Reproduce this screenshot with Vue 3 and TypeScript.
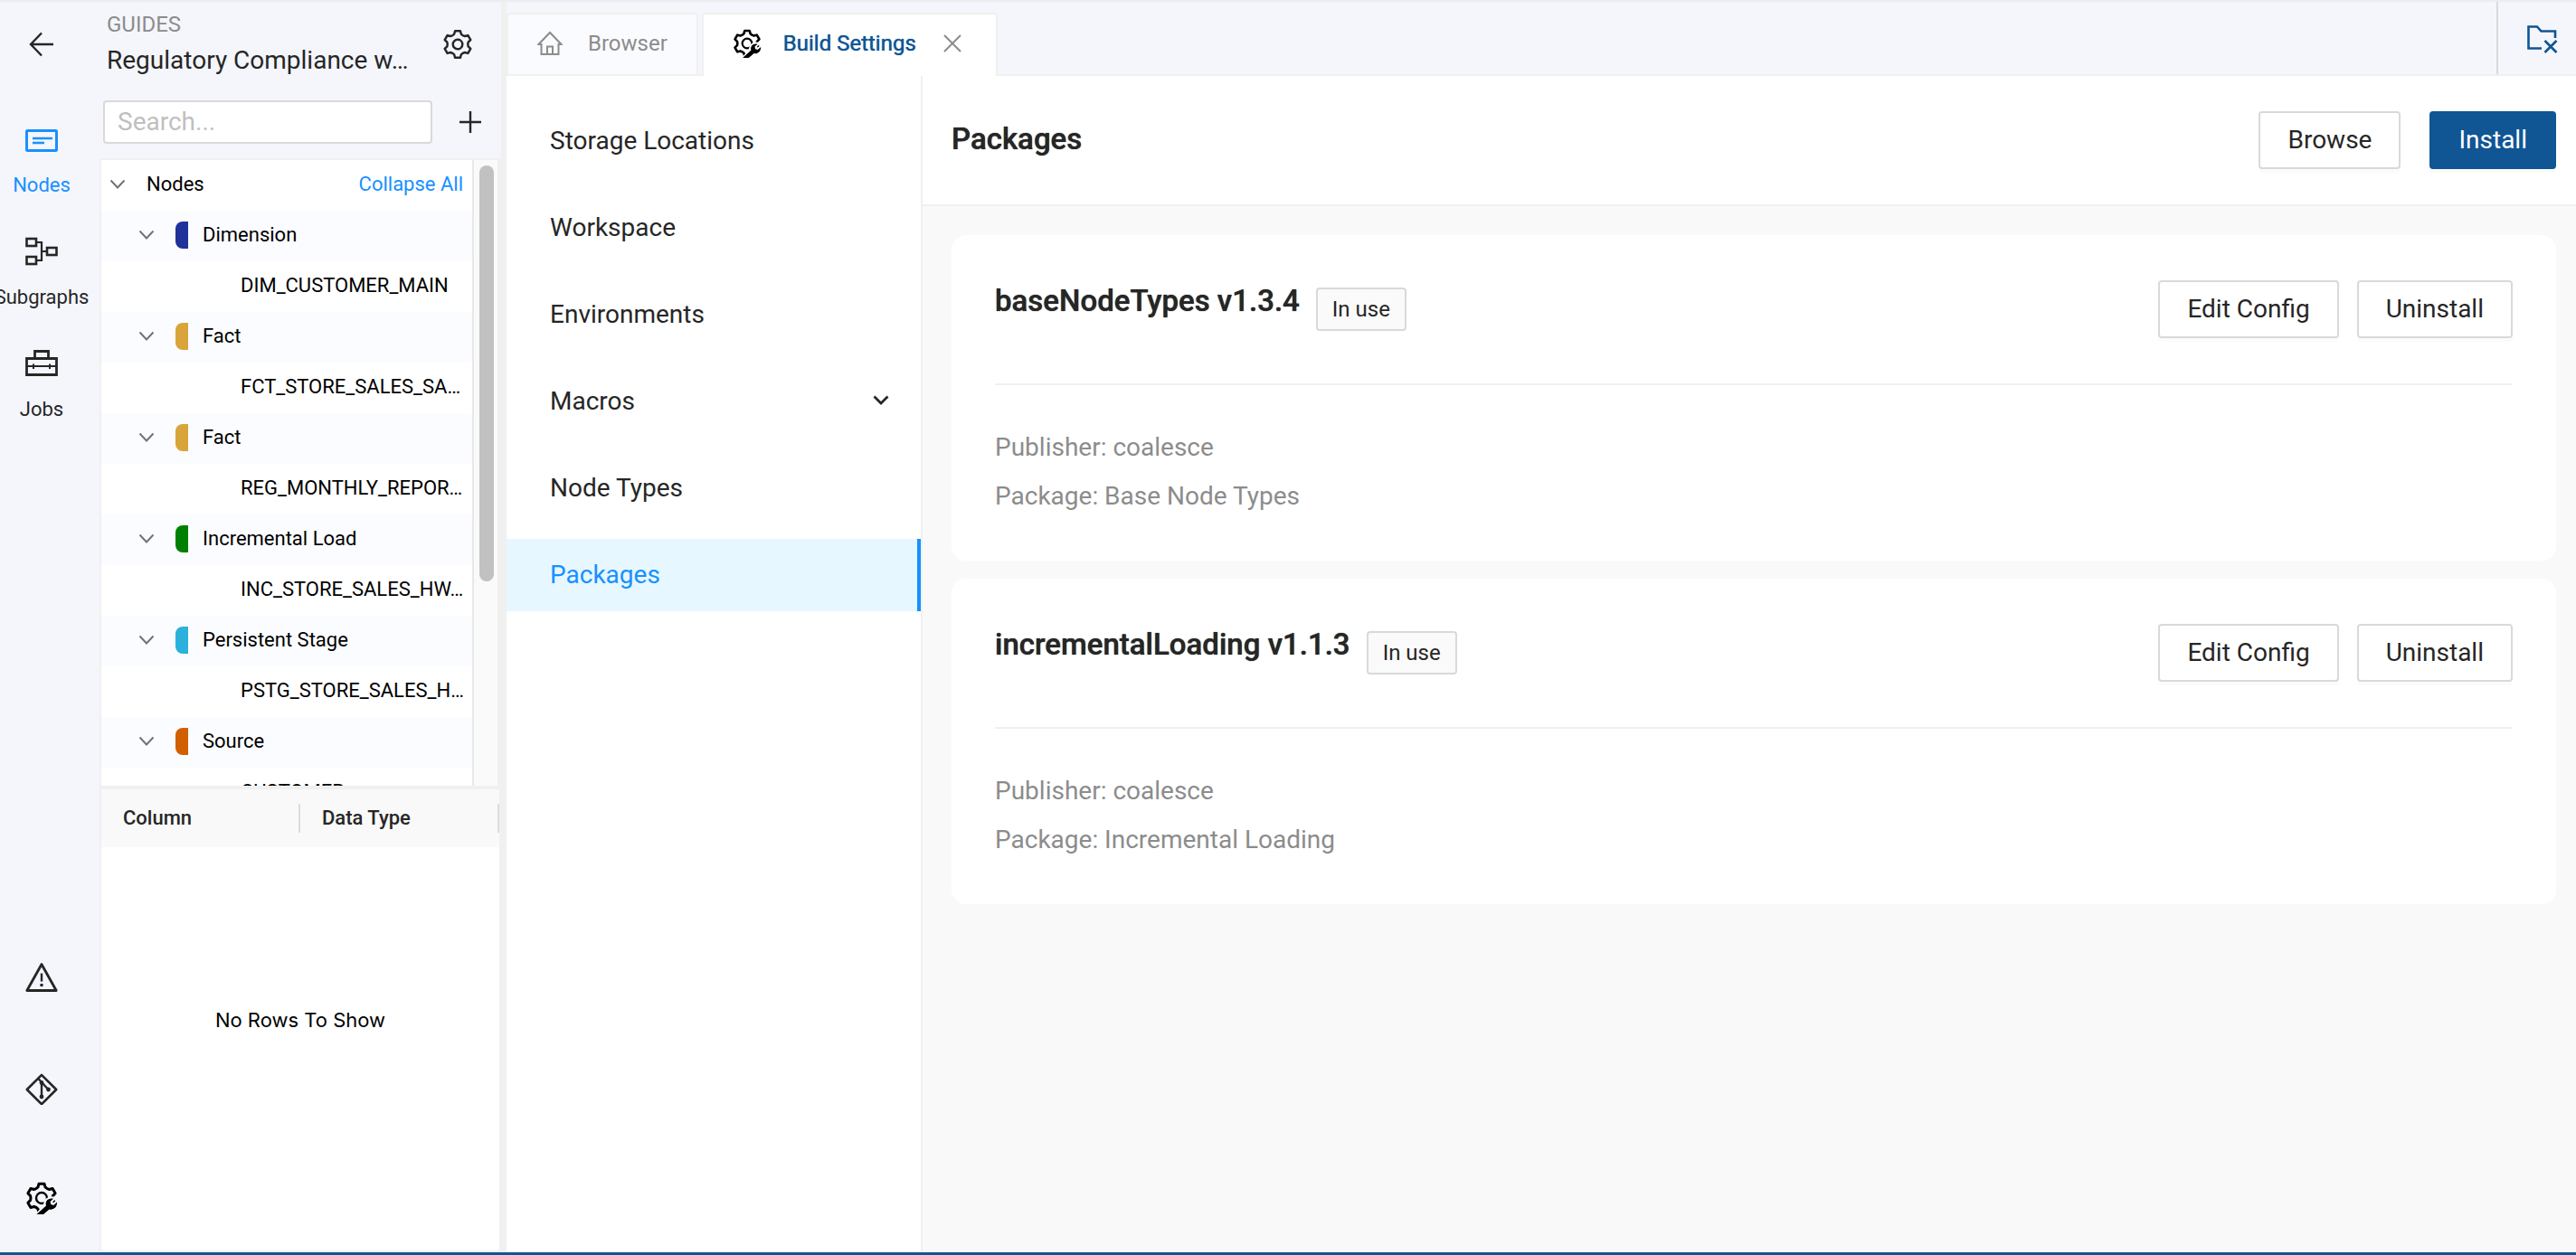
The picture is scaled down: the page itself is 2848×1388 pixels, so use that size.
<script setup lang="ts">
import { ref } from 'vue'

interface NodeGroup {
  label: string
  color: string
  child: string
}

interface PackageInfo {
  title: string
  publisher: string
  name: string
}

const groups: NodeGroup[] = [
  { label: 'Dimension', color: '#1f3299', child: 'DIM_CUSTOMER_MAIN' },
  { label: 'Fact', color: '#d9a43a', child: 'FCT_STORE_SALES_SA…' },
  { label: 'Fact', color: '#d9a43a', child: 'REG_MONTHLY_REPOR…' },
  { label: 'Incremental Load', color: '#008000', child: 'INC_STORE_SALES_HW…' },
  { label: 'Persistent Stage', color: '#2bb1db', child: 'PSTG_STORE_SALES_H…' },
  { label: 'Source', color: '#d15f00', child: 'CUSTOMER' },
]

const menu = ['Storage Locations', 'Workspace', 'Environments', 'Macros', 'Node Types', 'Packages']
const activeItem = ref('Packages')

const packages: PackageInfo[] = [
  { title: 'baseNodeTypes v1.3.4', publisher: 'coalesce', name: 'Base Node Types' },
  { title: 'incrementalLoading v1.1.3', publisher: 'coalesce', name: 'Incremental Loading' },
]

const search = ref('')

// Outline of a six-toothed gear centred in a 36 x 36 box.
function gearOutline(outer: number, inner: number): string {
  const at = (deg: number, r: number) => {
    const a = ((deg - 90) * Math.PI) / 180
    return `${(18 + r * Math.cos(a)).toFixed(2)} ${(18 + r * Math.sin(a)).toFixed(2)}`
  }
  let d = ''
  for (let k = 0; k < 6; k++) {
    const c = k * 60
    d += `${k === 0 ? 'M' : 'L'}${at(c - 19, inner)}L${at(c - 11, outer)}L${at(c + 11, outer)}L${at(c + 19, inner)}`
    d += `Q${at(c + 30, inner - 1)} ${at(c + 41, inner)}`
  }
  return d + 'Z'
}
const gear = gearOutline(16, 12.6)
</script>

<template>
  <div class="app">
    <svg class="defs" width="0" height="0" aria-hidden="true">
      <mask id="wrench-gap" maskUnits="userSpaceOnUse" x="0" y="0" width="36" height="36">
        <rect width="36" height="36" fill="#fff" />
        <path d="M13.5 36L22.5 27C21 22 25 17.5 31 18.5L27.5 22 28.5 25 31 26 35 22.5C35.5 28 31 31.5 26 30.5L20 36Z" fill="#000" stroke="#000" stroke-width="4" />
        <path d="M22 33L36 20V36H22Z" fill="#000" />
      </mask>
      <symbol id="build-icon" viewBox="0 0 36 36">
        <g mask="url(#wrench-gap)" fill="none" stroke="#000" stroke-width="3" stroke-linejoin="round">
          <path :d="gear" />
          <circle cx="18" cy="18" r="6" stroke-width="2.4" />
        </g>
        <path d="M12.5 36L23 26.5C21.5 21.5 25.5 17.5 31 18.8L27.5 22 28.3 25 31.2 26 35 22.5C35.5 28 31 31.5 26.5 30.5L20 36Z" fill="#000" />
      </symbol>
      <symbol id="chevron" viewBox="0 0 18 12">
        <path d="M1.5 1.5L9 9.5 16.5 1.5" fill="none" stroke="currentColor" stroke-width="2" />
      </symbol>
    </svg>

    <div class="shell">
      <nav class="rail" aria-label="Workspace">
        <button class="rail-back" aria-label="Back">
          <svg width="28" height="28" viewBox="0 0 28 28" fill="none" stroke="currentColor" stroke-width="2.4"><path d="M27 14H2M14 1.5L2 14 14 26.5" /></svg>
        </button>
        <button class="rail-item active">
          <svg width="36" height="36" viewBox="0 0 36 36" fill="none" stroke="currentColor"><rect x="1.5" y="7.5" width="33" height="22" rx="1" stroke-width="3" /><path d="M8 16H30M8 21H21" stroke-width="2.4" /></svg>
          <span>Nodes</span>
        </button>
        <button class="rail-item">
          <svg width="36" height="36" viewBox="0 1 36 36" fill="none" stroke="currentColor" stroke-width="2.6"><rect x="1.5" y="4" width="10.5" height="8" /><rect x="1.5" y="24" width="10.5" height="8" /><rect x="24" y="14" width="10.5" height="8" /><path d="M12 8H18V28H12M18 18H24" stroke-width="2.2" /></svg>
          <span>Subgraphs</span>
        </button>
        <button class="rail-item">
          <svg width="36" height="36" viewBox="0 2 36 36" fill="none" stroke="currentColor" stroke-width="2.8"><path d="M1.5 13.5H34.5V31.5H1.5Z" /><path d="M10.5 13V5.5H25.5V13" /><path d="M2 22H34M9 19.5V25M27 19.5V25" stroke-width="2" /></svg>
          <span>Jobs</span>
        </button>
        <div class="rail-bottom">
          <button aria-label="Problems">
            <svg width="36" height="36" viewBox="0 0 36 36" fill="none" stroke="currentColor" stroke-linejoin="round"><path d="M18 3.5L34.2 32.5H1.8Z" stroke-width="2.8" /><path d="M18 13.5V22.5" stroke-width="2.4" /><circle cx="18" cy="26.5" r="1.8" fill="currentColor" stroke="none" /></svg>
          </button>
          <button aria-label="Git">
            <svg width="36" height="38" viewBox="0 -3 36 38" fill="none" stroke="currentColor"><path d="M18 1.8L34.2 18 18 34.2 1.8 18Z" stroke-width="2.6" stroke-linejoin="round" /><path d="M14 5.5L18 10 25 17.5M18 10V26" stroke-width="2.4" /><g fill="currentColor" stroke="none"><circle cx="18" cy="10.5" r="2.4" /><circle cx="25.5" cy="18" r="2.4" /><circle cx="18" cy="26" r="2.4" /></g></svg>
          </button>
          <button aria-label="Build settings">
            <svg width="36" height="36"><use href="#build-icon" /></svg>
          </button>
        </div>
      </nav>

      <aside class="sidebar">
        <header class="project">
          <div class="project-text">
            <p class="eyebrow">GUIDES</p>
            <p class="project-name">Regulatory Compliance w…</p>
          </div>
          <button class="project-settings" aria-label="Project settings">
            <svg width="34" height="34" viewBox="0 0 36 36" fill="none" stroke="currentColor" stroke-width="2.6" stroke-linejoin="round"><path :d="gear" /><circle cx="18" cy="18" r="5.6" /></svg>
          </button>
        </header>
        <div class="search-row">
          <input v-model="search" type="text" placeholder="Search..." aria-label="Search nodes" />
          <button aria-label="Add node">
            <svg width="24" height="24" viewBox="0 0 24 24" fill="none" stroke="currentColor" stroke-width="2.4"><path d="M12 0V24M0 12H24" /></svg>
          </button>
        </div>

        <div class="panes">
          <section class="tree">
            <ul class="tree-list">
              <li class="tree-root">
                <svg class="chev" width="18" height="12"><use href="#chevron" /></svg>
                <span>Nodes</span>
                <button class="collapse">Collapse All</button>
              </li>
              <template v-for="(g, i) in groups" :key="i">
                <li class="tree-group">
                  <svg class="chev" width="18" height="12"><use href="#chevron" /></svg>
                  <i class="swatch" :style="{ background: g.color }"></i>
                  <span>{{ g.label }}</span>
                </li>
                <li class="tree-leaf"><span>{{ g.child }}</span></li>
              </template>
            </ul>
            <div class="track"><div class="thumb"></div></div>
          </section>
          <section class="grid">
            <table>
              <thead>
                <tr><th><span>Column</span></th><th><span>Data Type</span></th></tr>
              </thead>
            </table>
            <p class="empty">No Rows To Show</p>
          </section>
        </div>
      </aside>

      <main class="main">
        <div class="tabs">
          <button class="tab">
            <svg width="28" height="28" viewBox="0 0 28 28" fill="none" stroke="currentColor" stroke-width="2"><path d="M4.5 15H1.5L14 2 26.5 15H23.5M4.5 14V26H23.5V14M11 26V17.5H17V26" /></svg>
            <span>Browser</span>
          </button>
          <div class="tab current">
            <svg width="32" height="32"><use href="#build-icon" /></svg>
            <span>Build Settings</span>
            <button class="close" aria-label="Close tab">
              <svg width="20" height="20" viewBox="0 0 20 20" fill="none" stroke="currentColor" stroke-width="2"><path d="M1 1L19 19M19 1L1 19" /></svg>
            </button>
          </div>
          <button class="close-all" aria-label="Close all tabs">
            <svg width="36" height="36" viewBox="0 -2 36 36" fill="none" stroke="currentColor" stroke-width="2.6"><path d="M17 27.5H2.5V3.5H12L16.5 8.5H32V16" /><path d="M20.5 19L33.5 32M33.5 19L20.5 32" /></svg>
          </button>
        </div>

        <div class="content">
          <nav class="menu" aria-label="Build settings">
            <button
              v-for="item in menu"
              :key="item"
              :class="{ selected: item === activeItem }"
              @click="activeItem = item"
            >
              <span>{{ item }}</span>
              <svg v-if="item === 'Macros'" width="18" height="12" viewBox="0 0 18 12" fill="none" stroke="currentColor" stroke-width="2.8"><path d="M1.5 1.5L9 9 16.5 1.5" /></svg>
            </button>
          </nav>

          <section class="page">
            <header class="page-head">
              <h1>Packages</h1>
              <button class="btn">Browse</button>
              <button class="btn primary">Install</button>
            </header>
            <div class="cards">
              <article v-for="p in packages" :key="p.title" class="card">
                <div class="card-head">
                  <h2>{{ p.title }}</h2>
                  <span class="badge">In use</span>
                  <div class="actions">
                    <button class="btn">Edit Config</button>
                    <button class="btn">Uninstall</button>
                  </div>
                </div>
                <div class="card-body">
                  <p>Publisher: {{ p.publisher }}</p>
                  <p>Package: {{ p.name }}</p>
                </div>
              </article>
            </div>
          </section>
        </div>
      </main>
    </div>
  </div>
</template>

<style>
body {
  margin: 0;
}
</style>

<style scoped>
* {
  box-sizing: border-box;
}
.app {
  display: flex;
  flex-direction: column;
  height: 100vh;
  overflow: hidden;
  border-top: 2px solid #ecedf1;
  border-bottom: 3px solid #105594;
  background: #f4f6fb;
  color: #262626;
  font-family: Roboto, "Liberation Sans", sans-serif;
  font-size: 28px;
}
.defs {
  position: absolute;
}
p,
h1,
h2,
ul {
  margin: 0;
  padding: 0;
}
button {
  margin: 0;
  padding: 0;
  border: 0;
  background: none;
  color: inherit;
  font: inherit;
  cursor: pointer;
}
svg {
  display: block;
  flex: none;
}
.shell {
  display: flex;
  flex: 1;
  min-height: 0;
}

/* Left rail */
.rail {
  display: flex;
  flex: none;
  flex-direction: column;
  align-items: center;
  width: 110px;
  padding: 33px 18px 42px 0;
}
.rail-back {
  margin-bottom: 74px;
}
.rail-item {
  display: flex;
  flex-direction: column;
  align-items: center;
  gap: 16px;
  height: 92px;
  margin-bottom: 32px;
  font-size: 22px;
  line-height: 32px;
}
.rail-item.active {
  color: #1890ff;
}
.rail-bottom {
  display: flex;
  flex-direction: column;
  gap: 85px;
  margin-top: auto;
}

/* Sidebar */
.sidebar {
  display: flex;
  flex: none;
  flex-direction: column;
  width: 450px;
  border-right: 6px solid #f0f0f0;
}
.project {
  display: flex;
  align-items: center;
  justify-content: space-between;
  padding: 5px 31px 24px 8px;
}
.project-text p {
  line-height: 40px;
  white-space: nowrap;
}
.project .eyebrow {
  color: #8c8c8c;
  font-size: 24px;
}
.project-settings {
  padding-top: 4px;
}
.search-row {
  display: flex;
  align-items: center;
  justify-content: space-between;
  padding: 0 22px 16px 4px;
}
.search-row input {
  width: 364px;
  height: 48px;
  padding: 0 14px 2px;
  border: 2px solid #d9d9d9;
  border-radius: 4px;
  outline: none;
  background: #fff;
  color: #262626;
  font: inherit;
}
.search-row input::placeholder {
  color: #bfbfbf;
}
.panes {
  display: flex;
  flex: 1;
  flex-direction: column;
  gap: 4px;
  min-height: 0;
  padding: 2px;
  background: #f0f0f0;
}
.tree {
  display: flex;
  flex: 692 1 0;
  min-height: 0;
  background: #fff;
}
.tree-list {
  flex: 1;
  overflow: hidden;
  border-right: 2px solid #e8e8e8;
  color: #000;
  font-size: 22px;
  list-style: none;
}
.tree-list li {
  display: flex;
  align-items: center;
  height: 56px;
  padding-bottom: 2px;
}
.tree-list span,
.collapse {
  padding-bottom: 2px;
  white-space: nowrap;
}
.chev {
  color: #737373;
}
.tree-list .tree-root {
  gap: 23px;
  padding: 0 10px 2px 9px;
}
.collapse {
  margin-left: auto;
  color: #1890ff;
}
.tree-group {
  padding-left: 41px;
  background: #fbfcff;
}
.swatch {
  width: 14px;
  height: 30px;
  margin: 0 16px 0 23px;
  border-radius: 8px 0 0 8px;
}
.tree-leaf {
  padding-left: 154px;
}
.track {
  width: 28px;
  padding: 6px 4px 0 6px;
  border-right: 2px solid #f0f0f0;
  background: #fafafa;
}
.thumb {
  height: 67%;
  border-radius: 8px;
  background: #c1c1c1;
}
.grid {
  display: flex;
  flex: 510 1 0;
  flex-direction: column;
  min-height: 0;
  background: #fff;
}
.grid table {
  width: 100%;
  table-layout: fixed;
  border-collapse: collapse;
  background: #f9f9f9;
}
.grid th {
  height: 64px;
  padding: 0;
  font-size: 22px;
  font-weight: 500;
  text-align: left;
}
.grid th span {
  display: block;
  padding-left: 24px;
  border-right: 2px solid #dcdcdc;
  line-height: 32px;
}
.empty {
  display: flex;
  flex: 1;
  align-items: center;
  justify-content: center;
  padding-bottom: 64px;
  color: #000;
  font-family: Inter, Roboto, sans-serif;
  font-size: 22px;
}

/* Tabs */
.main {
  display: flex;
  flex: 1;
  flex-direction: column;
  min-width: 0;
}
.tabs {
  display: flex;
  align-items: flex-end;
  gap: 4px;
  height: 82px;
  border-bottom: 2px solid #f0f0f0;
}
.tab {
  display: flex;
  align-items: center;
  gap: 28px;
  height: 68px;
  padding: 0 32px 2px;
  border: 2px solid #f0f0f0;
  border-bottom: 0;
  border-radius: 4px 4px 0 0;
  background: #fafbfe;
  color: #8c8c8c;
  font-size: 24px;
}
.tab.current {
  gap: 24px;
  height: 70px;
  margin-bottom: -2px;
  padding: 0 38px 4px 32px;
  background: #fff;
  color: #105594;
}
.tab.current span {
  text-shadow: 0 0 1px currentColor;
}
.close {
  margin-left: 6px;
  color: #8c8c8c;
}
.close-all {
  align-self: stretch;
  margin-left: auto;
  padding: 0 19px 0 31px;
  border-left: 2px solid #d9d9d9;
  color: #105594;
}

/* Content */
.content {
  display: flex;
  flex: 1;
  min-height: 0;
}
.menu {
  display: flex;
  flex: none;
  flex-direction: column;
  gap: 16px;
  width: 460px;
  padding-top: 32px;
  border-right: 2px solid #f0f0f0;
  background: #fff;
}
.menu button {
  display: flex;
  align-items: center;
  justify-content: space-between;
  height: 80px;
  padding: 0 31px 2px 48px;
  border-right: 4px solid transparent;
}
.menu button.selected {
  border-right-color: #1890ff;
  background: #e6f7ff;
  color: #1890ff;
}
.page {
  flex: 1;
  min-width: 0;
  background: #f9f9f9;
}
.page-head {
  display: flex;
  align-items: center;
  gap: 32px;
  height: 144px;
  padding: 0 22px 0 32px;
  border-bottom: 2px solid #f0f0f0;
  background: #fff;
}
h1,
h2 {
  font-size: 33px;
  font-weight: 500;
  line-height: 46px;
  text-shadow: 0 0 1px currentColor;
}
h1 {
  margin-right: auto;
  padding-bottom: 2px;
}
.btn {
  height: 64px;
  padding: 0 30px 2px;
  border: 2px solid #d9d9d9;
  border-radius: 4px;
  background: #fff;
  box-shadow: 0 4px 0 rgba(0, 0, 0, 0.015);
}
.btn.primary {
  border-color: #105594;
  background: #105594;
  color: #fff;
}
.cards {
  display: flex;
  flex-direction: column;
  gap: 20px;
  padding: 32px 22px 32px 32px;
}
.card {
  height: 360px;
  padding: 50px 48px 0;
  border-radius: 16px;
  background: #fff;
}
.card-head {
  display: flex;
  align-items: flex-start;
  height: 116px;
  border-bottom: 2px solid #f0f0f0;
}
.badge {
  margin: 8px 0 0 18px;
  padding: 0 16px;
  border: 2px solid #d9d9d9;
  border-radius: 4px;
  background: #fafafa;
  font-size: 24px;
  line-height: 44px;
}
.actions {
  display: flex;
  gap: 20px;
  margin-left: auto;
}
.card-body {
  padding-top: 42px;
  color: #8c8c8c;
  line-height: 54px;
}
</style>
